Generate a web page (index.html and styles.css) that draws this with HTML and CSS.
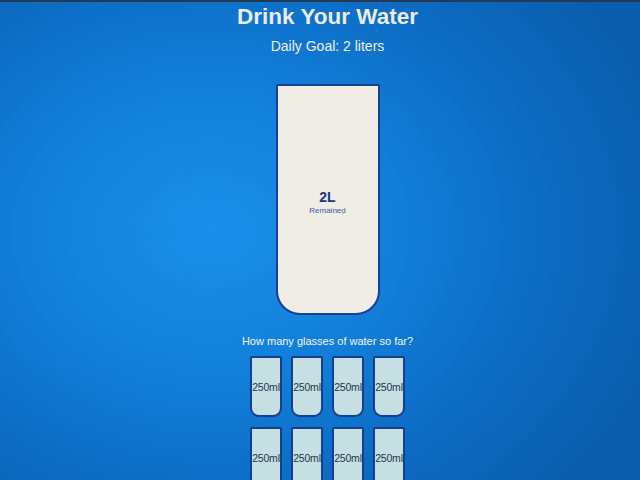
FILE: index.html
```html
<!DOCTYPE html>
<html lang="en">
<head>
<meta charset="utf-8">
<title>Drink Your Water</title>
<link rel="stylesheet" href="styles.css">
</head>
<body>
<main class="app">
  <h1 class="title">Drink Your Water</h1>
  <h3 class="goal">Daily Goal: 2 liters</h3>
  <div class="cup cup-big">
    <div class="remained">
      <span class="liters">2L</span>
      <small class="remained-label">Remained</small>
    </div>
  </div>
  <p class="question">How many glasses of water so far?</p>
  <div class="cups">
    <div class="cup cup-small">250ml</div>
    <div class="cup cup-small">250ml</div>
    <div class="cup cup-small">250ml</div>
    <div class="cup cup-small">250ml</div>
    <div class="cup cup-small">250ml</div>
    <div class="cup cup-small">250ml</div>
    <div class="cup cup-small">250ml</div>
    <div class="cup cup-small">250ml</div>
  </div>
</main>
</body>
</html>
```
FILE: styles.css
```css
* { box-sizing: border-box; }
html, body { height: 100%; }
body {
  margin: 0;
  overflow: hidden;
  font-family: "Liberation Sans", Arial, sans-serif;
  color: #f2f2f2;
  background: radial-gradient(ellipse 75% 80% at 33% 48%, #1a8fe9 0%, #1281dc 35%, #0c6bc2 70%, #0a5dac 100%);
  border-top: 2px solid #233a56;
}
.app {
  display: flex;
  flex-direction: column;
  align-items: center;
  padding: 2px 0 0 15px;
}
.title {
  margin: 0;
  font-size: 22.5px;
  line-height: 25px;
  font-weight: bold;
  color: #ececec;
}
.goal {
  margin: 9px 0 0;
  font-size: 14px;
  line-height: 16px;
  font-weight: normal;
  color: #f0f0f0;
}
.cup {
  border: 2px solid #1b3f90;
  background: #f0ede6;
}
.cup-big {
  margin-top: 30px;
  width: 104px;
  height: 231px;
  border-radius: 2px 2px 24px 24px;
  display: flex;
  align-items: center;
  justify-content: center;
}
.remained {
  display: flex;
  flex-direction: column;
  align-items: center;
  margin-top: 6px;
}
.liters {
  font-size: 14px;
  line-height: 16px;
  font-weight: bold;
  color: #1a3585;
}
.remained-label {
  font-size: 8px;
  line-height: 11px;
  color: #3d5c9c;
}
.question {
  margin: 20px 0 0;
  font-size: 11px;
  line-height: 13px;
  color: #f4f4f4;
}
.cups {
  margin-top: 8px;
  display: grid;
  grid-template-columns: repeat(4, 32px);
  column-gap: 9px;
  row-gap: 10px;
}
.cup-small {
  height: 61px;
  border-width: 2.5px;
  border-radius: 2px 2px 9px 9px;
  background: #c6dfe2;
  border-color: #163e8e;
  display: flex;
  align-items: center;
  justify-content: center;
  font-size: 10.5px;
  color: #1e3550;
  letter-spacing: -0.2px;
  white-space: nowrap;
  overflow: visible;
}
```
